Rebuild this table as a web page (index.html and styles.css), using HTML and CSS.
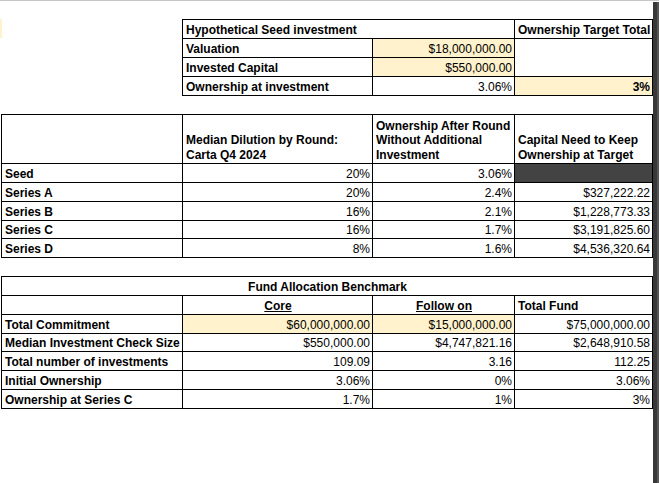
FILE: index.html
```html
<!DOCTYPE html>
<html lang="en">
<head>
<meta charset="utf-8">
<title>Seed investment model</title>
<link rel="stylesheet" href="styles.css">
</head>
<body>
<div class="page">
  <div class="sheet">
    <div class="row-top">
      <div class="edge-fill"></div>
      <div class="grid t1">
        <div class="c b span2">Hypothetical Seed investment</div>
        <div class="c b">Ownership Target Total</div>
        <div class="c b">Valuation</div>
        <div class="c r y">$18,000,000.00</div>
        <div class="c rspan2"></div>
        <div class="c b">Invested Capital</div>
        <div class="c r y">$550,000.00</div>
        <div class="c b">Ownership at investment</div>
        <div class="c r">3.06%</div>
        <div class="c r b y">3%</div>
      </div>
    </div>

    <div class="grid t2">
      <div class="c"></div>
      <div class="c b hd">Median Dilution by Round:<br>Carta Q4 2024</div>
      <div class="c b hd">Ownership After Round<br>Without Additional<br>Investment</div>
      <div class="c b hd">Capital Need to Keep<br>Ownership at Target</div>

      <div class="c b">Seed</div>
      <div class="c r">20%</div>
      <div class="c r">3.06%</div>
      <div class="c dk"></div>

      <div class="c b">Series A</div>
      <div class="c r">20%</div>
      <div class="c r">2.4%</div>
      <div class="c r">$327,222.22</div>

      <div class="c b">Series B</div>
      <div class="c r">16%</div>
      <div class="c r">2.1%</div>
      <div class="c r">$1,228,773.33</div>

      <div class="c b">Series C</div>
      <div class="c r">16%</div>
      <div class="c r">1.7%</div>
      <div class="c r">$3,191,825.60</div>

      <div class="c b">Series D</div>
      <div class="c r">8%</div>
      <div class="c r">1.6%</div>
      <div class="c r">$4,536,320.64</div>
    </div>

    <div class="grid t3">
      <div class="c b ctr span4">Fund Allocation Benchmark</div>

      <div class="c"></div>
      <div class="c b ctr"><span class="u">Core</span></div>
      <div class="c b ctr"><span class="u">Follow on</span></div>
      <div class="c b">Total Fund</div>

      <div class="c b">Total Commitment</div>
      <div class="c r y">$60,000,000.00</div>
      <div class="c r y">$15,000,000.00</div>
      <div class="c r">$75,000,000.00</div>

      <div class="c b">Median Investment Check Size</div>
      <div class="c r">$550,000.00</div>
      <div class="c r">$4,747,821.16</div>
      <div class="c r">$2,648,910.58</div>

      <div class="c b">Total number of investments</div>
      <div class="c r">109.09</div>
      <div class="c r">3.16</div>
      <div class="c r">112.25</div>

      <div class="c b">Initial Ownership</div>
      <div class="c r">3.06%</div>
      <div class="c r">0%</div>
      <div class="c r">3.06%</div>

      <div class="c b">Ownership at Series C</div>
      <div class="c r">1.7%</div>
      <div class="c r">1%</div>
      <div class="c r">3%</div>
    </div>
  </div>
  <div class="scrollbar"></div>
</div>
</body>
</html>
```
FILE: styles.css
```css
* { box-sizing: border-box; }

html, body {
  margin: 0;
  padding: 0;
  background: #ffffff;
}

body {
  font-family: "Liberation Sans", Arial, sans-serif;
  font-size: 12px;
  color: #000000;
}

.page {
  display: flex;
  width: 659px;
  height: 483px;
  border-top: 1px solid #c6c6c6;
  overflow: hidden;
}

.sheet {
  flex: 0 0 653px;
  padding-top: 18px;
}

.scrollbar {
  flex: 0 0 6px;
  margin-top: 1px;
  background: #383838;
  border-right: 2px solid #555555;
}

.row-top {
  display: flex;
  align-items: flex-start;
}

.edge-fill {
  width: 2px;
  height: 19px;
  background: #fff2cc;
}

.grid {
  display: grid;
  width: max-content;
  background: #000000;
  gap: 1px;
  padding: 1px;
}

.t1 {
  margin-left: 180px;
  grid-template-columns: 189px 141px 137px;
  grid-template-rows: repeat(4, 18px);
}

.t2 {
  margin-top: 18px;
  margin-left: 1px;
  grid-template-columns: 180px 189px 141px 137px;
  grid-template-rows: 48px 18px 18px 18px 17px 18px;
}

.t3 {
  margin-top: 18px;
  margin-left: 1px;
  grid-template-columns: 180px 189px 141px 137px;
  grid-template-rows: 18px 18px 18px 17px 18px 18px 18px;
}

.c {
  background: #ffffff;
  display: flex;
  align-items: flex-end;
  padding: 0 2px 1px 3px;
  line-height: 14px;
  white-space: nowrap;
  overflow: hidden;
}

.hd {
  line-height: 14.5px;
  padding-bottom: 1px;
}

.b { font-weight: bold; }
.r { justify-content: flex-end; }
.ctr { justify-content: center; }
.y { background: #fff2cc; }
.dk { background: #434343; }
.u { text-decoration: underline; }

.span2 { grid-column: span 2; }
.span4 { grid-column: span 4; }
.rspan2 { grid-row: span 2; }
```
